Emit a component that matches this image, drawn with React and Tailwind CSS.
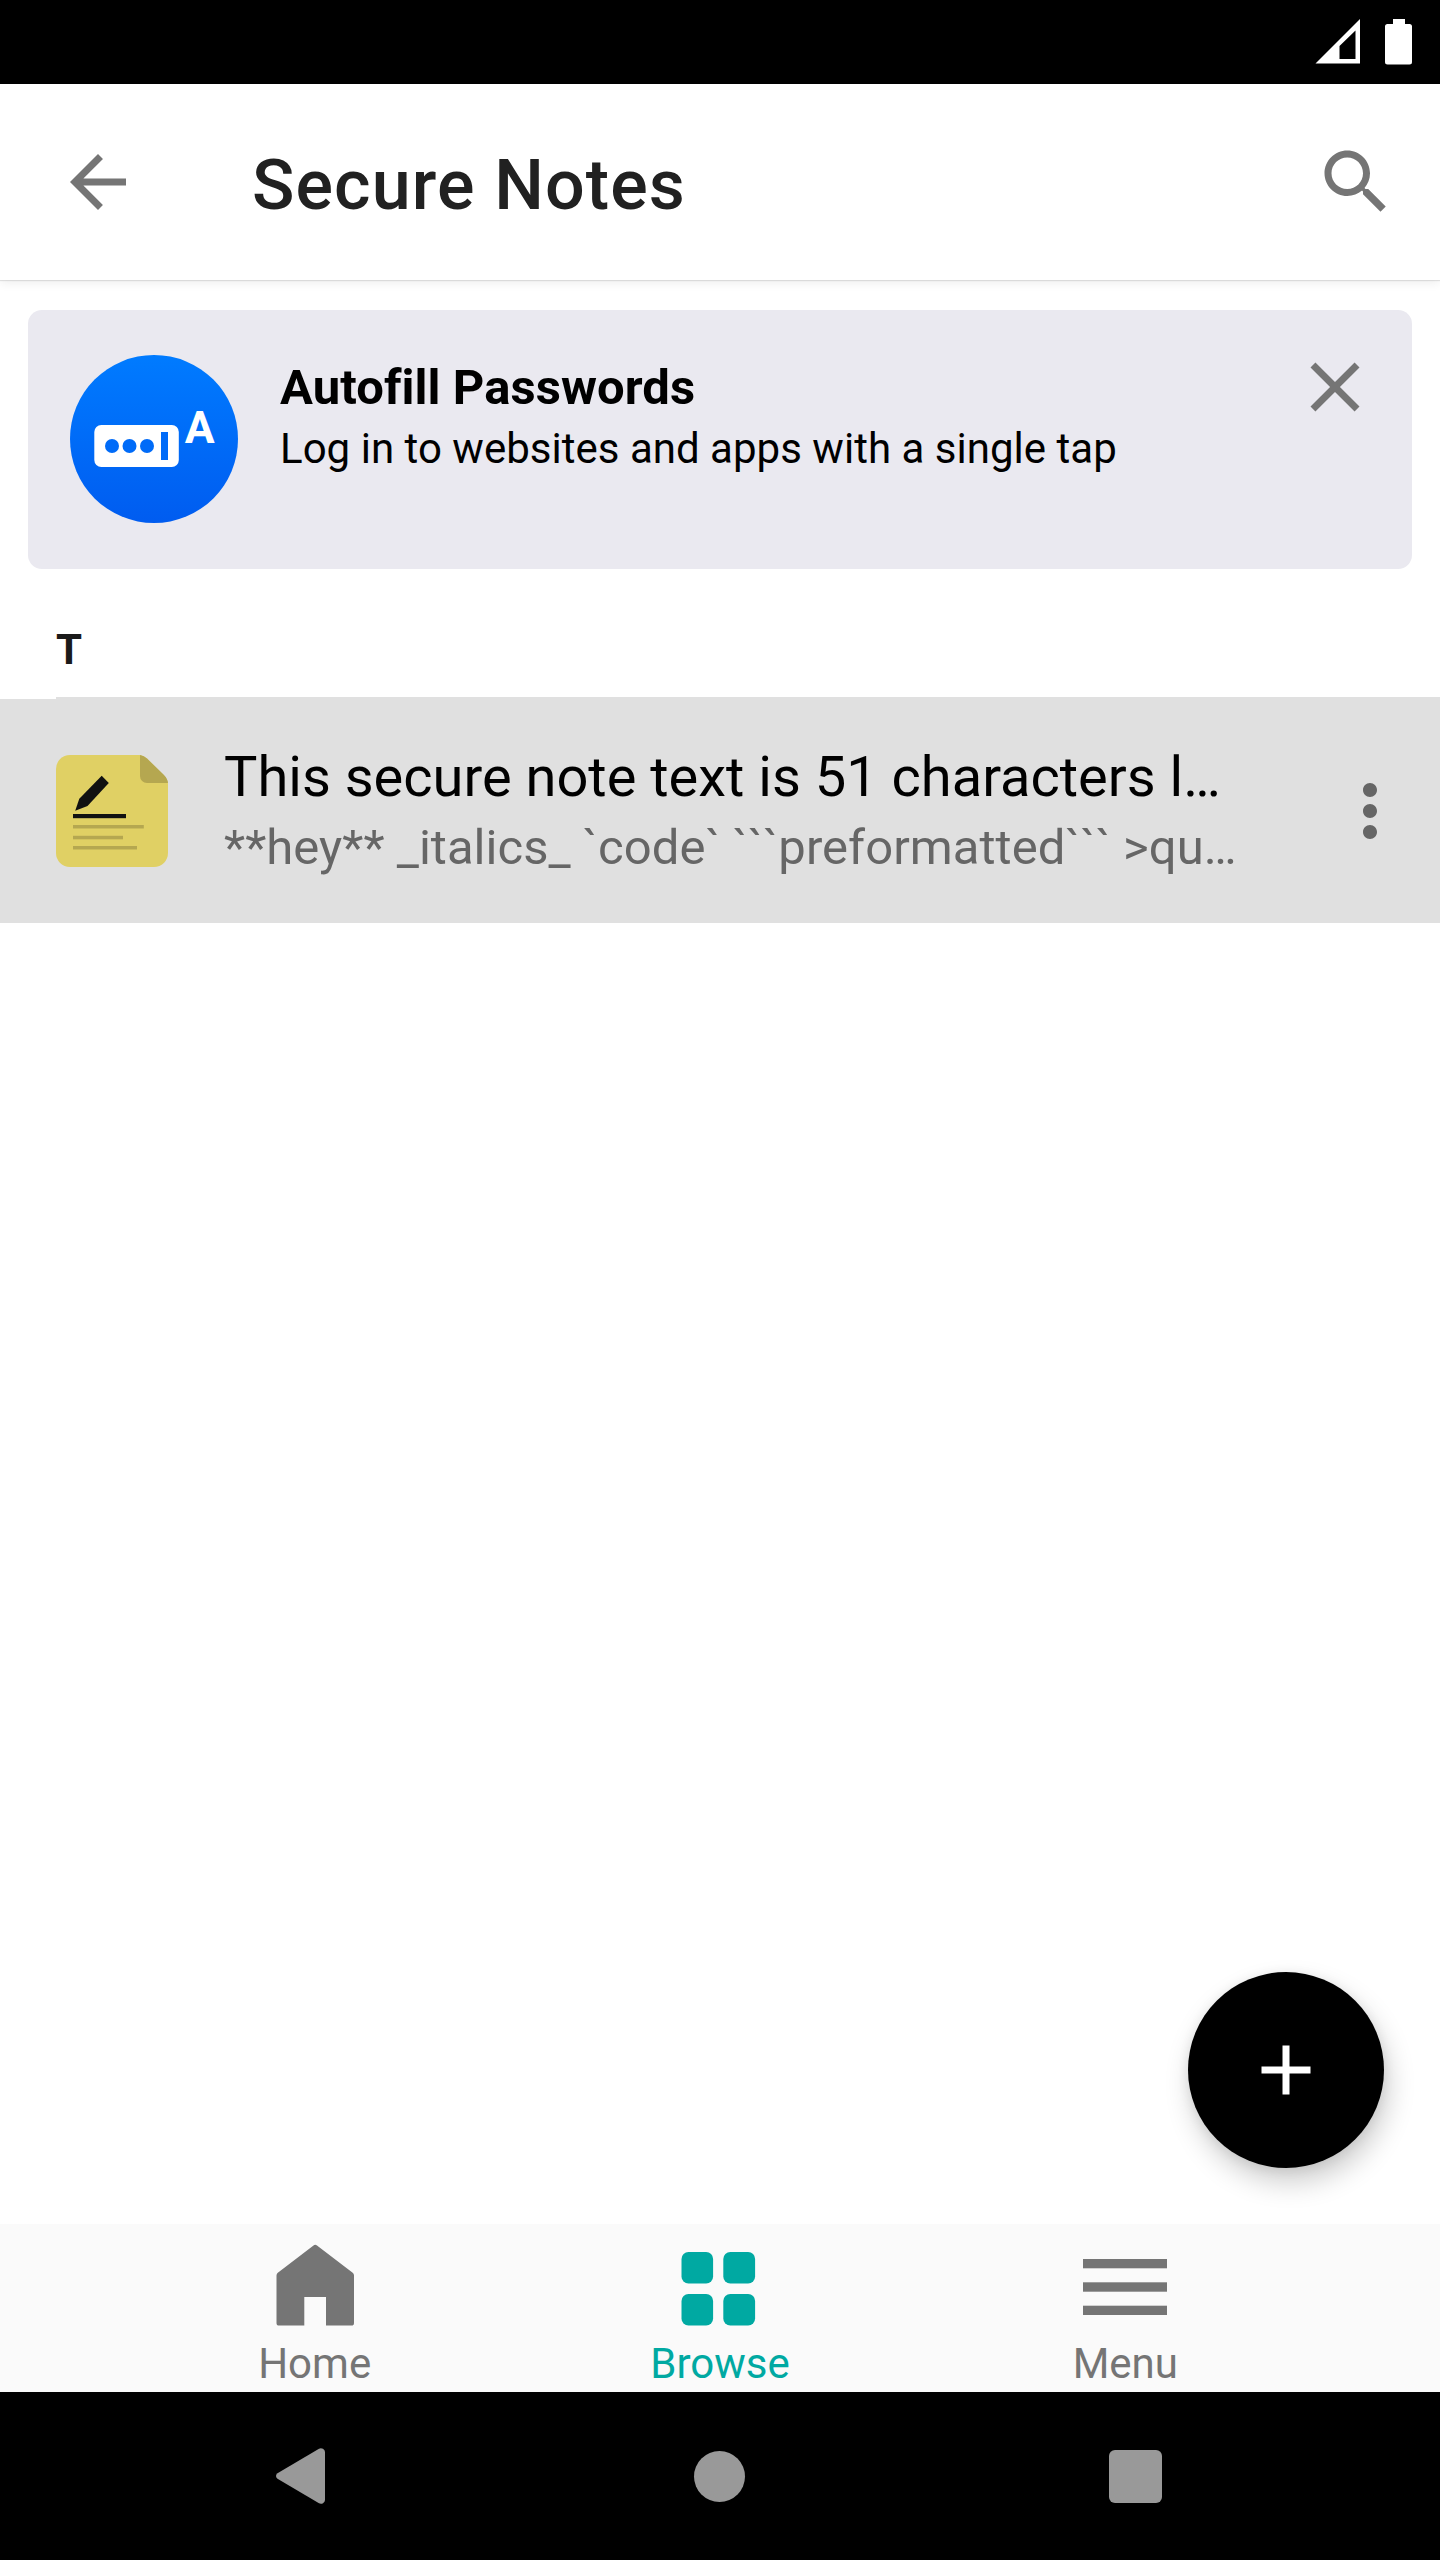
import React from 'react';

function MaterialIcon({ d, className }) {
  return (
    <svg viewBox="0 0 24 24" className={className} fill="currentColor" aria-hidden="true">
      <path d={d} />
    </svg>
  );
}

const ICONS = {
  back: 'M20 11H7.83l5.59-5.59L12 4l-8 8 8 8 1.41-1.41L7.83 13H20v-2z',
  search:
    'M15.5 14h-.79l-.28-.27C15.41 12.59 16 11.11 16 9.5 16 5.91 13.09 3 9.5 3S3 5.91 3 9.5 5.91 16 9.5 16c1.61 0 3.09-.59 4.23-1.57l.27.28v.79l5 4.99L20.49 19l-4.99-5zm-6 0C7.01 14 5 11.99 5 9.5S7.01 5 9.5 5 14 7.01 14 9.5 11.99 14 9.5 14z',
  close:
    'M19 6.41L17.59 5 12 10.59 6.41 5 5 6.41 10.59 12 5 17.59 6.41 19 12 13.41 17.59 19 19 17.59 13.41 12z',
  more: 'M12 8c1.1 0 2-.9 2-2s-.9-2-2-2-2 .9-2 2 .9 2 2 2zm0 2c-1.1 0-2 .9-2 2s.9 2 2 2 2-.9 2-2-.9-2-2-2zm0 6c-1.1 0-2 .9-2 2s.9 2 2 2 2-.9 2-2-.9-2-2-2z',
  add: 'M19 13h-6v6h-2v-6H5v-2h6V5h2v6h6v2z',
};

function StatusBar() {
  return (
    <div className="flex h-[84px] shrink-0 items-center justify-end gap-[25px] bg-black pr-7 text-white">
      <svg viewBox="0 0 45 46" className="h-[46px] w-[45px]" fill="currentColor" aria-label="Signal">
        <path fillRule="evenodd" d="M0.5 44.5L45 0V44.5ZM24.5 27V40H40.5V11.5Z" />
      </svg>
      <svg viewBox="0 0 27 46" className="h-[46px] w-[27px]" fill="currentColor" aria-label="Battery">
        <path d="M8 0h12v5h4.500q2.500 0 2.500 2.500v35.500q0 2.500-2.500 2.500h-22q-2.500 0-2.500-2.500v-35.500q0-2.500 2.500-2.500h5.500z" />
      </svg>
    </div>
  );
}

function Toolbar() {
  return (
    <header className="z-10 flex h-[196px] shrink-0 items-center bg-white pr-[42px] pl-14 text-[#757575] shadow-[0_1px_1px_rgba(0,0,0,0.1),0_3px_10px_rgba(0,0,0,0.07)]">
      <MaterialIcon d={ICONS.back} className="size-[84px]" />
      <h1 className="ml-28 flex-1 pt-1.5 text-[70px] leading-[84px] font-medium tracking-[1.12px] text-[#212121]">
        Secure Notes
      </h1>
      <MaterialIcon d={ICONS.search} className="size-[84px]" />
    </header>
  );
}

function AutofillLogo() {
  return (
    <svg viewBox="0 0 168 168" className="size-[168px] shrink-0" aria-hidden="true">
      <defs>
        <linearGradient id="autofill-bg" x1="0" y1="0" x2="0" y2="1">
          <stop offset="0" stopColor="#007bff" />
          <stop offset="1" stopColor="#005cf0" />
        </linearGradient>
      </defs>
      <circle cx="84" cy="84" r="84" fill="url(#autofill-bg)" />
      <rect x="24.300" y="70" width="84.500" height="42" rx="7" fill="#fff" />
      <circle cx="42" cy="91" r="7" fill="#006bf8" />
      <circle cx="59.500" cy="91" r="7" fill="#006bf8" />
      <circle cx="77" cy="91" r="7" fill="#006bf8" />
      <rect x="91" y="77" width="7" height="28" fill="#006bf8" />
      <text x="114.800" y="87.700" fill="#fff" fontSize="44.500" fontWeight="700">
        A
      </text>
    </svg>
  );
}

function AutofillCard() {
  return (
    <section className="mx-7 mt-[30px] flex h-[259px] shrink-0 items-start rounded-[14px] bg-[#eae9f0] pt-[45px] pr-[35px] pl-[42px] text-black">
      <AutofillLogo />
      <div className="ml-[42px] flex-1 pt-1">
        <h2 className="text-[49px] leading-[58px] font-bold tracking-[0.06px] [font-variant-ligatures:common-ligatures]">
          Autofill Passwords
        </h2>
        <p className="mt-[7px] text-[42px] leading-[50px] tracking-[0.02px]">
          Log in to websites and apps with a single tap
        </p>
      </div>
      <MaterialIcon d={ICONS.close} className="-mt-2.5 size-[84px] text-[#757575]" />
    </section>
  );
}

function NoteIcon() {
  return (
    <svg viewBox="0 0 112 112" className="size-28 shrink-0" aria-hidden="true">
      <path
        fill="#e0d064"
        d="M14 0H84Q88 0.500 91 3.500L108 20.500Q112 25 112 29V98A14 14 0 0 1 98 112H14A14 14 0 0 1 0 98V14A14 14 0 0 1 14 0Z"
      />
      <path fill="#b5a750" d="M84 0Q88 0.500 91 3.500L107.500 19.500Q111.500 23.500 112 28H91A7 7 0 0 1 84 21Z" />
      <path fill="#111" d="M45.700 20.700L52.800 28L31.500 51L19.200 55.700L23.300 43.700Z" />
      <rect x="17" y="59" width="53" height="4.200" fill="#111" />
      <rect x="17" y="70" width="70.800" height="3.500" fill="#b5a750" />
      <rect x="17" y="80.800" width="50" height="3.500" fill="#b5a750" />
      <rect x="17" y="91" width="64" height="3.500" fill="#b5a750" />
    </svg>
  );
}

function NoteRow() {
  return (
    <div className="flex h-56 shrink-0 items-center bg-[#e0e0e0] pr-7 pl-14">
      <NoteIcon />
      <div className="ml-14 flex-1 whitespace-nowrap">
        <div className="-mt-px text-[56px] leading-[66px] text-black">This secure note text is 51 characters l…</div>
        <div className="mt-[9px] text-[49px] leading-[58px] tracking-[0.04px] text-[#666]">
          **hey** _italics_ `code` ```preformatted``` &gt;qu…
        </div>
      </div>
      <MaterialIcon d={ICONS.more} className="size-[84px] text-[#666]" />
    </div>
  );
}

function HomeIcon() {
  return (
    <svg viewBox="0 0 84 84" className="size-[84px]" fill="currentColor" aria-hidden="true">
      <path d="M40.500 7.500Q42.200 6.100 44 7.500L80 35Q81 36 81 37.500V85Q81 87.600 78.400 87.600H53V59H31.300V87.600H6.100Q3.500 87.600 3.500 85V37.500Q3.500 36 4.500 35Z" />
    </svg>
  );
}

function BrowseIcon() {
  return (
    <svg viewBox="0 0 84 84" className="size-[84px]" fill="currentColor" aria-hidden="true">
      <rect x="3.500" y="14" width="31.600" height="31.600" rx="7" />
      <rect x="45.300" y="14" width="31.800" height="31.600" rx="7" />
      <rect x="3.500" y="56" width="31.600" height="31.600" rx="7" />
      <rect x="45.300" y="56" width="31.800" height="31.600" rx="7" />
    </svg>
  );
}

function MenuIcon() {
  return (
    <svg viewBox="0 0 84 84" className="size-[84px]" fill="currentColor" aria-hidden="true">
      <rect x="0" y="21" width="84" height="9.300" />
      <rect x="0" y="44.300" width="84" height="9.400" />
      <rect x="0" y="67.700" width="84" height="9.300" />
    </svg>
  );
}

function Tab({ icon, label, active }) {
  return (
    <div
      className={
        'flex flex-1 flex-col items-center pt-3.5 [&>svg]:overflow-visible ' +
        (active ? 'text-[#00a9a2]' : 'text-[#757575]')
      }
    >
      {icon}
      <span className="mt-[17px] text-[42px] leading-[50px]">{label}</span>
    </div>
  );
}

function SystemNav() {
  return (
    <div className="flex h-[168px] shrink-0 items-center justify-between bg-black pr-[278px] pl-[276px] text-[#999]">
      <svg viewBox="0 0 49 56" className="h-14 w-[49px]" fill="currentColor" aria-label="Back">
        <path d="M1.500 25.300L43 0.700Q45 -0.300 47 0.800Q49 2 49 4V52Q49 54 47 55.200Q45 56.300 43 55.300L1.500 30.700Q0 29.500 0 28T1.500 25.300Z" />
      </svg>
      <div className="ml-1 size-[51px] rounded-full bg-[#999]" aria-label="Home" />
      <div className="size-[53px] rounded-[6px] bg-[#999]" aria-label="Recents" />
    </div>
  );
}

export default function App() {
  return (
    <div className="flex h-[2560px] w-[1440px] flex-col overflow-hidden bg-white font-['Roboto',sans-serif]">
      <StatusBar />
      <Toolbar />
      <main className="relative flex flex-1 flex-col">
        <AutofillCard />
        <div className="ml-14 h-[130px] shrink-0 border-b-2 border-[#e0e0e0] pt-14 text-[42px] leading-[50px] font-bold text-[#1a1a1a]">
          T
        </div>
        <NoteRow />
        <button
          type="button"
          aria-label="Add"
          className="absolute right-14 bottom-14 flex size-[196px] items-center justify-center rounded-full bg-black text-white shadow-[4px_14px_28px_rgba(0,0,0,0.2),0_2px_12px_rgba(0,0,0,0.08)]"
        >
          <MaterialIcon d={ICONS.add} className="size-[84px]" />
        </button>
      </main>
      <nav className="flex h-[168px] shrink-0 bg-[#fafafa] px-28">
        <Tab icon={<HomeIcon />} label="Home" />
        <Tab icon={<BrowseIcon />} label="Browse" active />
        <Tab icon={<MenuIcon />} label="Menu" />
      </nav>
      <SystemNav />
    </div>
  );
}
